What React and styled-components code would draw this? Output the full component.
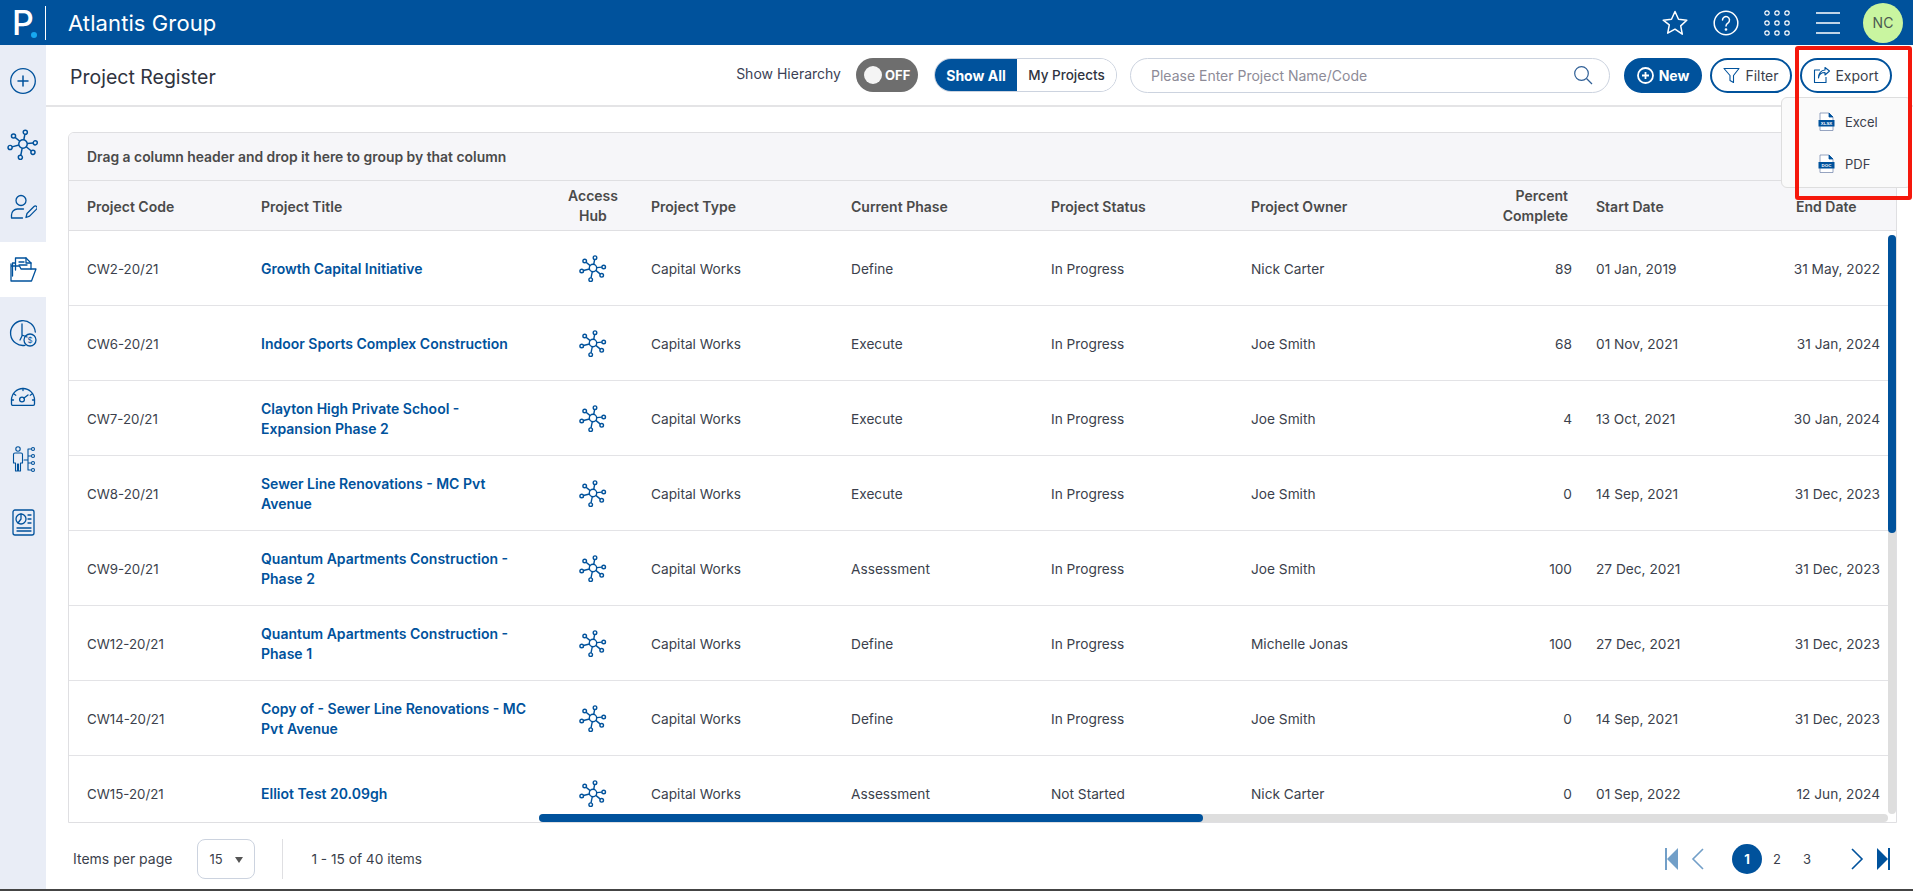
import React from "react";
import styled, { createGlobalStyle } from "styled-components";

const BLUE = "#00529c";

const Global = createGlobalStyle`
  html, body { margin: 0; padding: 0; background: #fff; }
  body { font-family: Inter, "Noto Sans", sans-serif; color: #3b3f4c; font-size: 14px; }
  * { box-sizing: border-box; }
`;

const Page = styled.div`
  width: 1913px; height: 891px; overflow: hidden; display: flex; flex-direction: column;
  border-bottom: 2px solid #444; position: relative; background: #fff;
`;
const TopBar = styled.header`
  height: 45px; flex: none; background: ${BLUE}; color: #fff; display: flex; align-items: center;
`;
const LogoWrap = styled.div`
  width: 46px; height: 34px; display: flex; align-items: center; padding-left: 12px;
  border-right: 1px solid #fff; position: relative;
`;
const LogoP = styled.span`
  font-size: 34px; font-weight: 500; line-height: 34px; color: #fff; font-family: Inter, sans-serif;
`;
const LogoDot = styled.i`
  position: absolute; left: 31px; top: 26px; width: 6px; height: 6px; border-radius: 50%; background: #17a8f0;
`;
const Org = styled.div`
  margin-left: 22px; font-size: 22px; font-weight: 400; letter-spacing: .1px; flex: 1;
`;
const TopIcons = styled.div`
  display: flex; align-items: center; padding-right: 10px;
`;
const TopIcon = styled.div`
  width: 51px; display: flex; justify-content: center; align-items: center;
`;
const Avatar = styled.div`
  width: 40px; height: 40px; border-radius: 50%; background: #c9f5a0; color: #4c5a50; font-size: 14px;
  display: flex; align-items: center; justify-content: center; margin-left: 10px;
`;
const Body = styled.div`
  flex: 1; min-height: 0; display: flex;
`;
const Side = styled.nav`
  width: 46px; flex: none; background: #e9edf6; padding-top: 4px; display: flex; flex-direction: column;
`;
const SideItem = styled.div`
  height: 55px; margin: 4px 0; flex: none; display: flex; align-items: center; justify-content: center;
  background: ${p => (p.$active ? "#fff" : "transparent")};
`;
const Main = styled.main`
  flex: 1; min-width: 0; display: flex; flex-direction: column; position: relative;
`;
const SubHead = styled.div`
  height: 62px; flex: none; border-bottom: 2px solid #e4e4e6; display: flex; align-items: center;
  padding: 0 21px 0 25px;
`;
const Title = styled.h1`
  margin: 0 0 0 -1px; font-size: 19.500px; font-weight: 400; color: #2f3340; flex: 1; position: relative; top: 2px;
`;
const HierLabel = styled.span`
  font-size: 14px; color: #3b3f55; margin-right: 15px; position: relative; top: -2px;
`;
const Toggle = styled.div`
  width: 62px; height: 34px; border-radius: 17px; background: #6e6e6e; color: #fff; display: flex;
  align-items: center; padding-left: 8px; gap: 3px; font-size: 13px; font-weight: 700; margin-right: 16px;
`;
const Knob = styled.i`
  width: 18px; height: 18px; border-radius: 50%; background: #f4f4f4;
`;
const Segment = styled.div`
  width: 183px; height: 34px; border: 1px solid #ccd3df; border-radius: 17px; display: flex; overflow: hidden;
  margin-right: 13px;
`;
const SegBtn = styled.div`
  display: flex; align-items: center; justify-content: center; flex: ${p => (p.$on ? "0 0 82px" : 1)};
  font-size: ${p => (p.$on ? "14px" : "13.500px")};
  font-weight: ${p => (p.$on ? 700 : 500)}; background: ${p => (p.$on ? BLUE : "#fff")};
  color: ${p => (p.$on ? "#fff" : "#2f3340")};
`;
const Search = styled.div`
  width: 480px; height: 35px; border: 1px solid #ccd3df; border-radius: 18px; display: flex; align-items: center;
  justify-content: space-between; padding: 0 16px 0 20px; color: #8d8b97; font-size: 14px; margin-right: 14px;
`;
const PillBtn = styled.div`
  height: 35px; border-radius: 18px; border: 2px solid ${BLUE}; display: flex; align-items: center; justify-content: center;
  gap: 5px; font-size: 14px; width: ${p => p.$w}px; margin-right: ${p => p.$mr || 0}px;
  background: ${p => (p.$solid ? BLUE : "#fff")}; color: ${p => (p.$solid ? "#fff" : "#3b3f4c")};
  font-weight: ${p => (p.$solid ? 700 : 400)};
`;
const Content = styled.div`
  flex: 1; min-height: 0; padding: 25px 16px 0 22px; display: flex; flex-direction: column;
`;
const Card = styled.div`
  height: 691px; flex: none; border: 1px solid #dfdfe2; border-radius: 6px 6px 0 0; overflow: hidden; position: relative;
`;
const GroupBar = styled.div`
  height: 48px; background: #f6f6f9; border-bottom: 1px solid #dfdfe2; display: flex; align-items: center;
  padding-left: 18px; font-size: 13.900px; font-weight: 600; color: #4a4a4a;
`;
const cols = "174px 310px 80px 200px 200px 200px 200px 145px 200px 200px";
const HeadRow = styled.div`
  display: grid; grid-template-columns: ${cols}; height: 50px; background: #f6f6f9; border-bottom: 1px solid #dfdfe2;
`;
const HeadCell = styled.div`
  display: flex; align-items: center; font-size: 14px; font-weight: 600; color: #4a4a4a; line-height: 20px;
  padding: ${p => (p.$right ? "1px 10px 0 0" : p.$center ? "1px 0 0" : "3px 0 0 18px")};
  justify-content: ${p => (p.$right ? "flex-end" : p.$center ? "center" : "flex-start")};
  text-align: ${p => (p.$right ? "right" : p.$center ? "center" : "left")};
`;
const Row = styled.div`
  display: grid; grid-template-columns: ${cols}; height: 75px; border-bottom: 1px solid #e3e3e6; background: #fff;
`;
const Cell = styled.div`
  display: flex; align-items: center; font-size: 13.700px; color: #3b3f4c; line-height: 20px;
  padding: ${p => (p.$center ? 0 : "2px")} ${p => (p.$right ? `${p.$right}px` : 0)} 0 ${p => (p.$right || p.$center ? 0 : "18px")};
  justify-content: ${p => (p.$right ? "flex-end" : p.$center ? "center" : "flex-start")};
`;
const CodeCell = styled(Cell)`
  font-size: 13.300px;
`;
const TitleCell = styled(Cell)`
  color: ${BLUE}; font-size: 14px; font-weight: 600; padding-right: 20px;
`;
const VTrack = styled.div`
  position: absolute; right: 0; top: 102px; bottom: 8px; width: 8px; background: #dedede; border-radius: 4px;
`;
const VThumb = styled.div`
  width: 8px; height: 298px; background: ${BLUE}; border-radius: 4px;
`;
const HTrack = styled.div`
  position: absolute; left: 470px; right: 8px; bottom: 0; height: 8px; background: #dedede; border-radius: 4px;
`;
const HThumb = styled.div`
  width: 664px; height: 8px; background: ${BLUE}; border-radius: 4px;
`;
const Footer = styled.div`
  flex: 1; display: flex; align-items: center; padding: 5px 0 0 5px; font-size: 14px; color: #3b3f4c;
`;
const Count = styled.span`
  font-size: 13.700px;
`;
const PageSelect = styled.div`
  width: 58px; height: 40px; border: 1px solid #ccd3df; border-radius: 8px; margin-left: 25px; display: flex;
  align-items: center; justify-content: space-between; padding: 0 11px; font-size: 13px;
`;
const Caret = styled.i`
  width: 0; height: 0; border-left: 4px solid transparent; border-right: 4px solid transparent;
  border-top: 6px solid #555; margin-top: 2px;
`;
const Divider = styled.i`
  width: 1px; height: 40px; background: #dfdfe2; margin: 0 28px 0 27px;
`;
const Pager = styled.div`
  margin-left: auto; display: flex; align-items: center; margin-right: 7px;
`;
const Pg = styled.div`
  width: 30px; height: 30px; border-radius: 50%; display: flex; align-items: center; justify-content: center;
  font-size: 13px; font-weight: ${p => (p.$on ? 700 : 400)}; background: ${p => (p.$on ? BLUE : "transparent")};
  color: ${p => (p.$on ? "#fff" : "#3b3f4c")};
`;
const PagerIcon = styled.span`
  display: flex; margin-left: ${p => p.$ml || 0}px; opacity: ${p => (p.$dim ? 0.55 : 1)};
`;
const Menu = styled.div`
  position: absolute; left: 1735px; top: 52px; width: 131px; height: 91px; background: #fafafa; border: 1px solid #dedede;
  border-radius: 6px; padding-top: 3px; z-index: 3;
`;
const MenuItem = styled.div`
  height: 42px; display: flex; align-items: center; gap: 10px; padding-left: 36px; font-size: 13px; color: #3b3f4c;
`;
const Annotation = styled.div`
  position: absolute; left: 1749px; top: 1px; width: 117px; height: 154px; border: 4px solid #f5180c; border-radius: 3px; z-index: 5;
`;
const IconText = styled.text`
  font-family: "Liberation Sans", sans-serif; font-size: 4.400px; font-weight: 700; fill: #fff;
`;

const Hub = ({ size = 28, sw = 1.4 }) => {
  const sats = [[2, -10.3], [10.7, -1], [8.7, 7.3], [-2.3, 11.7], [-11.3, 3], [-8.3, -7]];
  return (
    <svg width={size} height={size} viewBox="-14 -14 28 28" fill="none" stroke={BLUE} strokeWidth={sw}>
      <circle r="3.7" />
      {sats.map(([x, y], i) => {
        const l = Math.hypot(x, y);
        return (
          <g key={i}>
            <line x1={(x / l) * 3.7} y1={(y / l) * 3.7} x2={x - (x / l) * 1.8} y2={y - (y / l) * 1.8} />
            <circle cx={x} cy={y} r="1.8" />
          </g>
        );
      })}
    </svg>
  );
};

const Svg = ({ s = 28, children, sw = 1.3, c = BLUE }) => (
  <svg width={s} height={s} viewBox="0 0 28 28" fill="none" stroke={c} strokeWidth={sw} strokeLinecap="round" strokeLinejoin="round">
    {children}
  </svg>
);

const PlusIcon = () => (
  <Svg><circle cx="14" cy="14" r="12.3" /><path d="M14 9v10M9 14h10" strokeWidth="1.5" /></Svg>
);
const PersonEdit = () => (
  <Svg>
    <circle cx="12" cy="7.5" r="5" />
    <path d="M2.500 25v-3a6 6 0 0 1 6-6h6M2.500 25h11" />
    <path d="M17 24.500l1-4 7-7a1.800 1.800 0 0 1 2.600 2.600l-7 7z" />
  </Svg>
);
const Folder = () => (
  <Svg>
    <path d="M3.500 20V7H6M6.500 14V2h10.500l5 5v6" />
    <path d="M10 6h5M10 9h8M17 2v5h5" />
    <path d="M2 8v17h20.500L27 13H12l-1.500-3H2" />
  </Svg>
);
const ClockMoney = () => (
  <Svg>
    <path d="M16 26.300A12.400 12.400 0 1 1 26.300 13" />
    <path d="M13 5v12l-2 4M13 16l5 2" />
    <circle cx="21" cy="21" r="6" />
    <text x="21" y="24" textAnchor="middle" fontSize="8" stroke="none" fill={BLUE} fontFamily="Inter, sans-serif">$</text>
  </Svg>
);
const Gauge = () => (
  <Svg>
    <path d="M2.500 22v-4a11.500 11.500 0 0 1 23 0v4a1.300 1.300 0 0 1-1.300 1.300H3.800A1.300 1.300 0 0 1 2.500 22z" />
    <path d="M14 6.500v2M5 12l1.800 1.200M23 12l-1.800 1.200M2.500 18h2M25.500 18h-2" />
    <circle cx="13" cy="17.500" r="2.400" />
    <path d="M15 16l4-3" />
  </Svg>
);
const PeopleTree = () => (
  <Svg sw={1.1}>
    <circle cx="9" cy="4" r="2.200" />
    <path d="M6 8h6a1.500 1.500 0 0 1 1.500 1.500V18h-2v8H9.500v-7h-1v7H6.500v-8h-2V9.500A1.500 1.500 0 0 1 6 8z" />
    <path d="M15 15h4M19 4v21M19 4h3M19 11h3M19 18h3M19 25h3" />
    <circle cx="24" cy="4" r="1.500" /><circle cx="24" cy="11" r="1.500" /><circle cx="24" cy="18" r="1.500" /><circle cx="24" cy="25" r="1.500" />
  </Svg>
);
const Report = () => (
  <Svg>
    <rect x="4" y="2" width="21" height="25" rx="2" />
    <circle cx="12" cy="11" r="5" />
    <path d="M12 6v5l-3 4M19 7h3M19 11h3M19 15h3M8 20h14M8 23h14" />
  </Svg>
);

const Star = () => (
  <Svg s={28} c="#fff" sw={1.5}>
    <path d="M14 2.500l3.500 7.700 8.300 1-6.100 5.700 1.600 8.300L14 20.200l-7.300 4 1.600-8.300L2.200 11.200l8.300-1z" />
  </Svg>
);
const Help = () => (
  <Svg s={28} c="#fff" sw={1.5}>
    <circle cx="14" cy="14" r="11.800" />
    <path d="M10.500 11a3.500 3.500 0 1 1 5.600 2.800c-1.300.9-2.100 1.600-2.100 3.200" />
    <circle cx="14" cy="20.500" r=".6" fill="#fff" />
  </Svg>
);
const Dots = () => (
  <Svg s={28} c="#fff" sw={1.2}>
    {[4, 14, 24].map(y => [4, 14, 24].map(x => <circle key={x + "" + y} cx={x} cy={y} r="2.200" />))}
  </Svg>
);
const Burger = () => (
  <svg width="26" height="24" viewBox="0 0 26 24" stroke="#fff" strokeWidth="1.600"><path d="M1 2h24M1 12h24M1 22h24" /></svg>
);
const SearchIcon = () => (
  <svg width="20" height="20" viewBox="0 0 20 20" fill="none" stroke="#2f5f96" strokeWidth="1.200"><circle cx="8.500" cy="8.500" r="6.800" /><path d="M13.500 13.500l5.500 5.500" /></svg>
);
const NewIcon = () => (
  <svg width="17" height="17" viewBox="0 0 17 17" fill="none" stroke="#fff" strokeWidth="1.800"><circle cx="8.500" cy="8.500" r="7.500" /><path d="M8.500 5v7M5 8.500h7" /></svg>
);
const FilterIcon = () => (
  <svg width="17" height="17" viewBox="0 0 17 17" fill="none" stroke={BLUE} strokeWidth="1.100" strokeLinejoin="round"><path d="M1 1.500h15L10.500 8.500v7L7 13.500V8.500z" /></svg>
);
const ExportIcon = () => (
  <svg width="17" height="17" viewBox="0 0 17 17" fill="none" stroke={BLUE} strokeWidth="1.100" strokeLinejoin="round"><path d="M7 3H1.500v12.500H13V10" /><path d="M5.500 11c.5-3.500 3-5.500 6.500-5.500V8l4.500-4L12 .5V3c-4 0-6.500 3.500-6.500 8z" /></svg>
);
const FileIcon = ({ label }) => (
  <svg width="17" height="20" viewBox="0 0 17 20" fill="none" stroke="#7b8db0" strokeWidth=".8">
    <path d="M2 18.500V1h9l4 4v13.500z" fill="#fff" />
    <path d="M11 1l4 4h-4z" fill={BLUE} stroke={BLUE} />
    <rect x=".5" y="8" width="16" height="6.500" fill={BLUE} stroke="none" />
    <IconText x="8.500" y="13" textAnchor="middle" stroke="none">{label}</IconText>
  </svg>
);
const First = () => (
  <svg width="13" height="22" viewBox="0 0 13 22" fill={BLUE}><rect width="2" height="22" /><path d="M13 0v22L2 11z" /></svg>
);
const Prev = () => (
  <svg width="13" height="22" viewBox="0 0 13 22" fill="none" stroke={BLUE} strokeWidth="1.600"><path d="M12 1L2 11l10 10" /></svg>
);
const Next = () => (
  <svg width="13" height="22" viewBox="0 0 13 22" fill="none" stroke={BLUE} strokeWidth="1.600"><path d="M1 1l10 10L1 21" /></svg>
);
const Last = () => (
  <svg width="13" height="22" viewBox="0 0 13 22" fill={BLUE}><rect x="11" width="2" height="22" /><path d="M0 0v22l11-11z" /></svg>
);

const rows = [
  ["CW2-20/21", "Growth Capital Initiative", "Define", "In Progress", "Nick Carter", "89", "01 Jan, 2019", "31 May, 2022"],
  ["CW6-20/21", "Indoor Sports Complex Construction", "Execute", "In Progress", "Joe Smith", "68", "01 Nov, 2021", "31 Jan, 2024"],
  ["CW7-20/21", "Clayton High Private School - Expansion Phase 2", "Execute", "In Progress", "Joe Smith", "4", "13 Oct, 2021", "30 Jan, 2024"],
  ["CW8-20/21", "Sewer Line Renovations - MC Pvt Avenue", "Execute", "In Progress", "Joe Smith", "0", "14 Sep, 2021", "31 Dec, 2023"],
  ["CW9-20/21", "Quantum Apartments Construction - Phase 2", "Assessment", "In Progress", "Joe Smith", "100", "27 Dec, 2021", "31 Dec, 2023"],
  ["CW12-20/21", "Quantum Apartments Construction - Phase 1", "Define", "In Progress", "Michelle Jonas", "100", "27 Dec, 2021", "31 Dec, 2023"],
  ["CW14-20/21", "Copy of - Sewer Line Renovations - MC Pvt Avenue", "Define", "In Progress", "Joe Smith", "0", "14 Sep, 2021", "31 Dec, 2023"],
  ["CW15-20/21", "Elliot Test 20.09gh", "Assessment", "Not Started", "Nick Carter", "0", "01 Sep, 2022", "12 Jun, 2024"],
];

export default function App() {
  return (
    <Page>
      <Global />
      <TopBar>
        <LogoWrap><LogoP>P</LogoP><LogoDot /></LogoWrap>
        <Org>Atlantis Group</Org>
        <TopIcons>
          <TopIcon><Star /></TopIcon>
          <TopIcon><Help /></TopIcon>
          <TopIcon><Dots /></TopIcon>
          <TopIcon><Burger /></TopIcon>
          <Avatar>NC</Avatar>
        </TopIcons>
      </TopBar>
      <Body>
        <Side>
          <SideItem><PlusIcon /></SideItem>
          <SideItem><Hub size={32} sw={1.3} /></SideItem>
          <SideItem><PersonEdit /></SideItem>
          <SideItem $active><Folder /></SideItem>
          <SideItem><ClockMoney /></SideItem>
          <SideItem><Gauge /></SideItem>
          <SideItem><PeopleTree /></SideItem>
          <SideItem><Report /></SideItem>
        </Side>
        <Main>
          <SubHead>
            <Title>Project Register</Title>
            <HierLabel>Show Hierarchy</HierLabel>
            <Toggle><Knob />OFF</Toggle>
            <Segment>
              <SegBtn $on>Show All</SegBtn>
              <SegBtn>My Projects</SegBtn>
            </Segment>
            <Search>Please Enter Project Name/Code<SearchIcon /></Search>
            <PillBtn $solid $w={78} $mr={8}><NewIcon />New</PillBtn>
            <PillBtn $w={82} $mr={8}><FilterIcon />Filter</PillBtn>
            <PillBtn $w={92}><ExportIcon />Export</PillBtn>
          </SubHead>
          <Menu>
            <MenuItem><FileIcon label="XLSX" />Excel</MenuItem>
            <MenuItem><FileIcon label="DOC" />PDF</MenuItem>
          </Menu>
          <Annotation />
          <Content>
            <Card>
              <GroupBar>Drag a column header and drop it here to group by that column</GroupBar>
              <HeadRow>
                <HeadCell>Project Code</HeadCell>
                <HeadCell>Project Title</HeadCell>
                <HeadCell $center>Access<br />Hub</HeadCell>
                <HeadCell>Project Type</HeadCell>
                <HeadCell>Current Phase</HeadCell>
                <HeadCell>Project Status</HeadCell>
                <HeadCell>Project Owner</HeadCell>
                <HeadCell $right>Percent<br />Complete</HeadCell>
                <HeadCell>Start Date</HeadCell>
                <HeadCell>End Date</HeadCell>
              </HeadRow>
              {rows.map(r => (
                <Row key={r[0]}>
                  <CodeCell>{r[0]}</CodeCell>
                  <TitleCell>{r[1]}</TitleCell>
                  <Cell $center><Hub /></Cell>
                  <Cell>Capital Works</Cell>
                  <Cell>{r[2]}</Cell>
                  <Cell>{r[3]}</Cell>
                  <Cell>{r[4]}</Cell>
                  <Cell $right={6}>{r[5]}</Cell>
                  <Cell>{r[6]}</Cell>
                  <Cell $right={98}>{r[7]}</Cell>
                </Row>
              ))}
              <VTrack><VThumb /></VTrack>
              <HTrack><HThumb /></HTrack>
            </Card>
            <Footer>
              Items per page
              <PageSelect>15<Caret /></PageSelect>
              <Divider />
              <Count>1 - 15 of 40 items</Count>
              <Pager>
                <PagerIcon $dim><First /></PagerIcon>
                <PagerIcon $dim $ml={13}><Prev /></PagerIcon>
                <PagerIcon $ml={28}><Pg $on>1</Pg></PagerIcon>
                <Pg>2</Pg>
                <Pg>3</Pg>
                <PagerIcon $ml={29}><Next /></PagerIcon>
                <PagerIcon $ml={13}><Last /></PagerIcon>
              </Pager>
            </Footer>
          </Content>
        </Main>
      </Body>
    </Page>
  );
}
